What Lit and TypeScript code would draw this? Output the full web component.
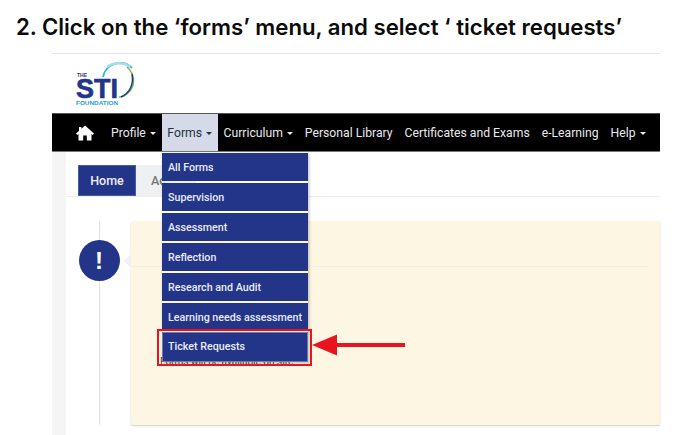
import { LitElement, html, css } from "lit";
import { customElement } from "lit/decorators.js";

@customElement("app-root")
export class AppRoot extends LitElement {
  static styles = css`
    :host { display: block; width: 684px; height: 435px; overflow: hidden; background: #fff; font-family: Roboto, "Liberation Sans", sans-serif; position: relative; }
    h1 { margin: 0; padding: 14px 0 0 16px; height: 39px; box-sizing: border-box; font: 600 22.2px/26px Inter, "Liberation Sans", sans-serif; color: #0b0b0b; letter-spacing: 0; white-space: pre; }
    .num { margin-right: 5px; }
    .shot { margin-left: 52px; width: 608px; height: 382px; margin-top: 14px; border-top: 1px solid #e6e6e6; display: flex; flex-direction: column; position: relative; }
    .logo { height: 59px; padding: 6px 0 0 22px; box-sizing: border-box; }
    .logo svg { display: block; }
    nav { height: 39px; background: #000; display: flex; align-items: stretch; padding-left: 12px; border-top: 1px solid #555; border-bottom: 1px solid #777; box-sizing: border-box; color: #e8e8ee; font-size: 12.2px; }
    .home { width: 41px; display: flex; align-items: center; padding-left: 12px; box-sizing: border-box; }
    .item { padding: 0 6px; display: flex; align-items: center; gap: 4px; white-space: nowrap; }
    .item.on { background: #d6d9e8; color: #26323f; padding: 0 5.5px; }
    .caret { width: 0; height: 0; border-left: 3px solid transparent; border-right: 3px solid transparent; border-top: 3px solid currentColor; margin-top: 1px; }
    .body { flex: 1; display: flex; min-height: 0; }
    .gutter { width: 14px; background: #f5f5f5; }
    main { flex: 1; display: flex; flex-direction: column; padding-top: 13px; min-width: 0; }
    .tabs { display: flex; height: 31px; padding-left: 12px; border-bottom: 1px solid #eeeeee; box-sizing: content-box; }
    .tab { background: #233589; color: #eef0f8; width: 58px; font-size: 12.5px; font-weight: 500; display: flex; align-items: center; justify-content: center; border: 1px solid #4a5aa0; box-sizing: border-box; }
    .tab.b { background: #eff0f1; color: #777; border: none; width: 60px; justify-content: flex-start; padding-left: 15px; }
    .timeline { flex: 1; display: flex; padding: 24px 0 11px 12px; min-height: 0; }
    .rail { width: 42px; margin-right: 11px; flex: none; display: flex; justify-content: center; background: linear-gradient(#dfe0e4, #dfe0e4) center / 1px 100% no-repeat; position: relative; }
    .badge { width: 41px; height: 41px; margin-top: 19px; border-radius: 50%; background: #233589; color: #fff; display: flex; align-items: center; justify-content: center; font: 700 24px "Liberation Sans", sans-serif; }
    .ptr { position: absolute; top: 33px; right: -11px; width: 0; height: 0; border: 7px solid transparent; border-right-color: #f1f1f1; border-left: 0; }
    .card { flex: 1; background: #fcf6e2; border-radius: 3px 0 0 3px; box-shadow: 0 1px 2px #cfcfc8; padding-top: 45px; box-sizing: border-box; }
    .card hr { margin: 0 12px 0 0; border: 0; border-top: 1px solid #f4eedd; }
    .menu { position: absolute; left: 110px; top: 99px; width: 146px; display: flex; flex-direction: column; gap: 2px; box-shadow: 1px 1px 3px #0004; }
    .menu div { height: 28px; background: #233589; color: #e9ebf5; font-size: 10.7px; font-weight: 500; display: flex; align-items: center; padding-left: 6px; white-space: nowrap; box-sizing: border-box; }
    .menu .tr { height: 30px; margin-top: -1px; border: 1px solid #6d7cb0; padding-left: 5px; padding-bottom: 2px; }
    .mark { position: absolute; left: 105px; top: 275px; width: 155px; height: 37px; border: 2px solid #e8141f; box-sizing: border-box; }
    .arrow { position: absolute; left: 259px; top: 278px; display: block; }
    .behind { position: absolute; left: 108px; top: 303px; width: 150px; font-size: 10px; color: #4a4a3a; white-space: nowrap; line-height: 10px; }
  `;

  render() {
    const menu = ["All Forms", "Supervision", "Assessment", "Reflection", "Research and Audit", "Learning needs assessment"];
    const navs: [string, boolean][] = [["Profile", true], ["Forms", true], ["Curriculum", true], ["Personal Library", false], ["Certificates and Exams", false], ["e-Learning", false], ["Help", true]];
    return html`
      <h1><span class="num">2.</span>Click on the ‘forms’ menu, and select ‘ ticket requests’</h1>
      <div class="shot">
        <div class="logo">
          <svg width="62" height="48" viewBox="0 0 62 48">
            <path d="M29 17 C31 8 38 3 46 3 C51 3 55 5 58 8" fill="none" stroke="#35b3dd" stroke-width="1.8"/>
            <path d="M33 7 C39 2 50 2 56 7" fill="none" stroke="#a8dcec" stroke-width="2.4"/>
            <path d="M53 7 C61 14 62 26 54 33 C51 36 48 37 45 37" fill="none" stroke="#79b943" stroke-width="1.5"/>
            <path d="M58 14 C60 24 56 33 47 37" fill="none" stroke="#1e3a8a" stroke-width="1.5"/>
            <text x="3" y="17" font-family="Liberation Sans" font-size="5" font-weight="700" fill="#233589">THE</text>
            <text x="2" y="38" font-family="Liberation Sans" font-size="27" font-weight="700" fill="#233589" textLength="42" lengthAdjust="spacingAndGlyphs" stroke="#233589" stroke-width=".6">STI</text>
            <text x="2" y="45" font-family="Liberation Sans" font-size="5" font-weight="700" fill="#2d9fd0" textLength="42" lengthAdjust="spacingAndGlyphs">FOUNDATION</text>
          </svg>
        </div>
        <nav>
          <div class="home">
            <svg width="18" height="16" viewBox="0 0 18 16"><path fill="#fff" d="M9 0.5 L18 8.5 L16.6 10 L15.5 9 V15.5 H10.8 V10.5 H7.2 V15.5 H2.5 V9 L1.4 10 L0 8.5 L3 5.8 V2 H5.4 V3.7 Z"/></svg>
          </div>
          ${navs.map(([t, c]) => html`<div class="item ${t === "Forms" ? "on" : ""}">${t}${c ? html`<span class="caret"></span>` : ""}</div>`)}
        </nav>
        <div class="body">
          <div class="gutter"></div>
          <main>
            <div class="tabs"><div class="tab">Home</div><div class="tab b">Ac</div></div>
            <div class="timeline">
              <div class="rail"><div class="badge">!</div><span class="ptr"></span></div>
              <div class="card"><hr /></div>
            </div>
          </main>
        </div>
        <div class="behind">Forms will be available on site</div>
        <div class="menu">
          ${menu.map((m) => html`<div>${m}</div>`)}
          <div class="tr">Ticket Requests</div>
        </div>
        <div class="mark"></div>
        <svg class="arrow" width="95" height="26" viewBox="0 0 95 26">
          <path fill="#e8141f" d="M1 13 L26 2.5 V11 H94 V15 H26 V23.5 Z"/>
        </svg>
      </div>
    `;
  }
}
